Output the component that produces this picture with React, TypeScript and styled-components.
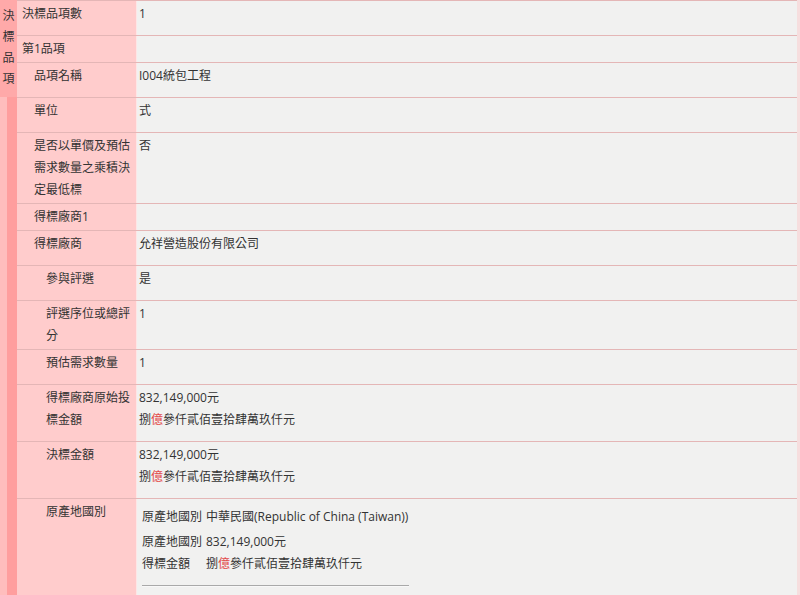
import React from "react";
import styled, { createGlobalStyle } from "styled-components";

const Global = createGlobalStyle`
  html, body { margin: 0; padding: 0; background: #ffffff; }
  body {
    font-family: "Open Sans", "Noto Sans CJK TC", sans-serif;
    font-size: 12px;
    color: #333333;
  }
`;

const Page = styled.div`
  display: flex;
  width: 800px;
  height: 595px;
  overflow: hidden;
  box-sizing: border-box;
`;

const SideStrip = styled.div`
  width: 17px;
  flex: 0 0 17px;
  display: flex;
  flex-direction: column;
`;

const SideHead = styled.div`
  background: #ffa9a9;
  display: flex;
  flex-direction: column;
  align-items: center;
  padding-top: 5px;
  height: 92px;
  line-height: 21px;
`;

const SideRest = styled.div`
  flex: 1;
  display: flex;
`;

const SideBand = styled.div<{ $tone: string; $w: number }>`
  width: ${(p) => p.$w}px;
  background: ${(p) => p.$tone};
`;

const Table = styled.div`
  flex: 1;
  display: flex;
  flex-direction: column;
  border-right: 3px solid #f6dede;
  box-shadow: inset -1px 0 0 #e6b3b3;
`;

const Row = styled.div<{ $grow?: boolean }>`
  display: grid;
  grid-template-columns: 120px 1fr;
  border-top: 1px solid #e4b6b6;
  ${(p) => (p.$grow ? "flex: 1;" : "")}
`;

const Label = styled.div<{ $indent: number }>`
  background: #ffcccc;
  padding: 2px 4px 2px ${(p) => 5 + p.$indent * 12}px;
  line-height: 22px;
  border-right: 1px solid #fde6e6;
`;

const Value = styled.div<{ $empty?: boolean }>`
  background: #f1f1f0;
  padding: 2px 4px ${(p) => (p.$empty ? 2 : 10)}px 2px;
  line-height: 22px;
`;

const Red = styled.span`
  color: #e24a4a;
`;

const Nested = styled.div`
  padding: 5px 0 0 3px;
  display: flex;
  flex-direction: column;
`;

const NestedLine = styled.div<{ $gap?: number }>`
  display: grid;
  grid-template-columns: 64px auto;
  line-height: 22px;
  margin-top: ${(p) => p.$gap ?? 0}px;
`;

const Rule = styled.div`
  width: 267px;
  height: 0;
  border-top: 1px solid #a9a9a9;
  border-bottom: 1px solid #f8f8f8;
  margin-top: 10px;
`;

type R = { label: string; indent: number; value?: React.ReactNode };

const Amount = () => (
  <>
    捌<Red>億</Red>參仟貳佰壹拾肆萬玖仟元
  </>
);

const rows: R[] = [
  { label: "決標品項數", indent: 0, value: "1" },
  { label: "第1品項", indent: 0 },
  { label: "品項名稱", indent: 1, value: "I004統包工程" },
  { label: "單位", indent: 1, value: "式" },
  { label: "是否以單價及預估需求數量之乘積決定最低標", indent: 1, value: "否" },
  { label: "得標廠商1", indent: 1 },
  { label: "得標廠商", indent: 1, value: "允祥營造股份有限公司" },
  { label: "參與評選", indent: 2, value: "是" },
  { label: "評選序位或總評分", indent: 2, value: "1" },
  { label: "預估需求數量", indent: 2, value: "1" },
  {
    label: "得標廠商原始投標金額",
    indent: 2,
    value: (
      <>
        832,149,000元
        <br />
        <Amount />
      </>
    ),
  },
  {
    label: "決標金額",
    indent: 2,
    value: (
      <>
        832,149,000元
        <br />
        <Amount />
      </>
    ),
  },
];

export default function App() {
  return (
    <>
      <Global />
      <Page>
        <SideStrip>
          <SideHead>
            <span>決</span>
            <span>標</span>
            <span>品</span>
            <span>項</span>
          </SideHead>
          <SideRest>
            <SideBand $tone="#ffbdbd" $w={7} />
            <SideBand $tone="#ff9e9e" $w={10} />
          </SideRest>
        </SideStrip>
        <Table>
          {rows.map((r, i) => (
            <Row key={i}>
              <Label $indent={r.indent}>{r.label}</Label>
              <Value $empty={r.value === undefined}>{r.value}</Value>
            </Row>
          ))}
          <Row $grow>
            <Label $indent={2}>原產地國別</Label>
            <Value>
              <Nested>
                <NestedLine>
                  <span>原產地國別</span>
                  <span>中華民國(Republic of China (Taiwan))</span>
                </NestedLine>
                <NestedLine $gap={3}>
                  <span>原產地國別</span>
                  <span>832,149,000元</span>
                </NestedLine>
                <NestedLine>
                  <span>得標金額</span>
                  <span>
                    <Amount />
                  </span>
                </NestedLine>
                <Rule />
              </Nested>
            </Value>
          </Row>
        </Table>
      </Page>
    </>
  );
}
